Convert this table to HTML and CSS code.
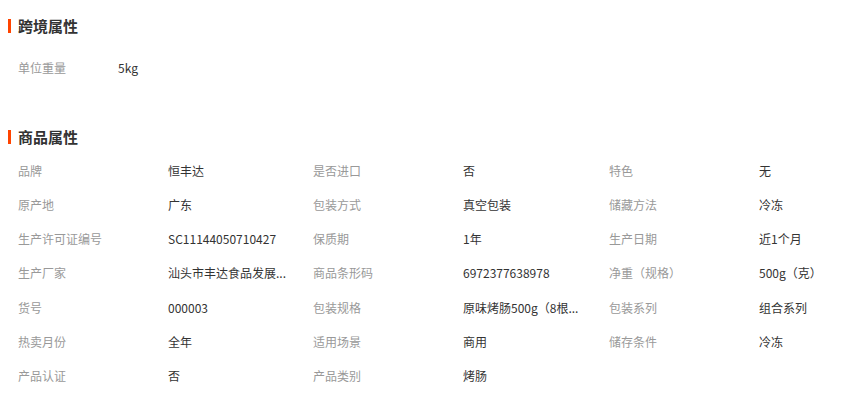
FILE: index.html
```html
<!DOCTYPE html>
<html lang="zh-CN">
<head>
    <meta charset="UTF-8">
    <title>商品属性</title>
    <link rel="stylesheet" href="styles.css">
</head>
<body>
    <div class="section section-cross">
        <h2 class="section-title"><span class="bar"></span>跨境属性</h2>
        <div class="attr-list attr-short">
            <span class="attr-name">单位重量</span>
            <span class="attr-value">5kg</span>
        </div>
    </div>

    <div class="section section-goods">
        <h2 class="section-title"><span class="bar"></span>商品属性</h2>
        <div class="attr-list">
            <span class="attr-name">品牌</span><span class="attr-value">恒丰达</span>
            <span class="attr-name">是否进口</span><span class="attr-value">否</span>
            <span class="attr-name">特色</span><span class="attr-value">无</span>

            <span class="attr-name">原产地</span><span class="attr-value">广东</span>
            <span class="attr-name">包装方式</span><span class="attr-value">真空包装</span>
            <span class="attr-name">储藏方法</span><span class="attr-value">冷冻</span>

            <span class="attr-name">生产许可证编号</span><span class="attr-value">SC11144050710427</span>
            <span class="attr-name">保质期</span><span class="attr-value">1年</span>
            <span class="attr-name">生产日期</span><span class="attr-value">近1个月</span>

            <span class="attr-name">生产厂家</span><span class="attr-value" title="汕头市丰达食品发展有限公司">汕头市丰达食品发展...</span>
            <span class="attr-name">商品条形码</span><span class="attr-value">6972377638978</span>
            <span class="attr-name">净重（规格）</span><span class="attr-value">500g（克）</span>

            <span class="attr-name">货号</span><span class="attr-value">000003</span>
            <span class="attr-name">包装规格</span><span class="attr-value" title="原味烤肠500g（8根装）">原味烤肠500g（8根...</span>
            <span class="attr-name">包装系列</span><span class="attr-value">组合系列</span>

            <span class="attr-name">热卖月份</span><span class="attr-value">全年</span>
            <span class="attr-name">适用场景</span><span class="attr-value">商用</span>
            <span class="attr-name">储存条件</span><span class="attr-value">冷冻</span>

            <span class="attr-name">产品认证</span><span class="attr-value">否</span>
            <span class="attr-name">产品类别</span><span class="attr-value">烤肠</span>
        </div>
    </div>
</body>
</html>
```

FILE: styles.css
```css
body {
    margin: 0;
    padding: 16px 8px 0;
    background: #fff;
    font-family: "Microsoft YaHei", "Noto Sans CJK SC", sans-serif;
    font-size: 12px;
    color: #333;
}
.section-title {
    display: flex;
    align-items: center;
    gap: 7px;
    margin: 0;
    height: 20px;
    line-height: 20px;
    font-size: 15px;
    font-weight: bold;
    color: #333;
}
.section-title .bar {
    width: 3px;
    height: 14px;
    background-color: #ff4400;
}
.section-cross .attr-list {
    margin-top: 14px;
}
.section-goods {
    margin-top: 43px;
}
.section-goods .attr-list {
    margin-top: 6px;
}
.attr-list {
    display: grid;
    grid-template-columns: 150px 145px 150px 146px 150px 1fr;
    grid-auto-rows: 34.2px;
    align-items: center;
    padding-left: 10px;
}
.attr-short {
    grid-template-columns: 100px 1fr;
}
.attr-name {
    color: #999;
}
.attr-value {
    color: #333;
    white-space: nowrap;
}
```
